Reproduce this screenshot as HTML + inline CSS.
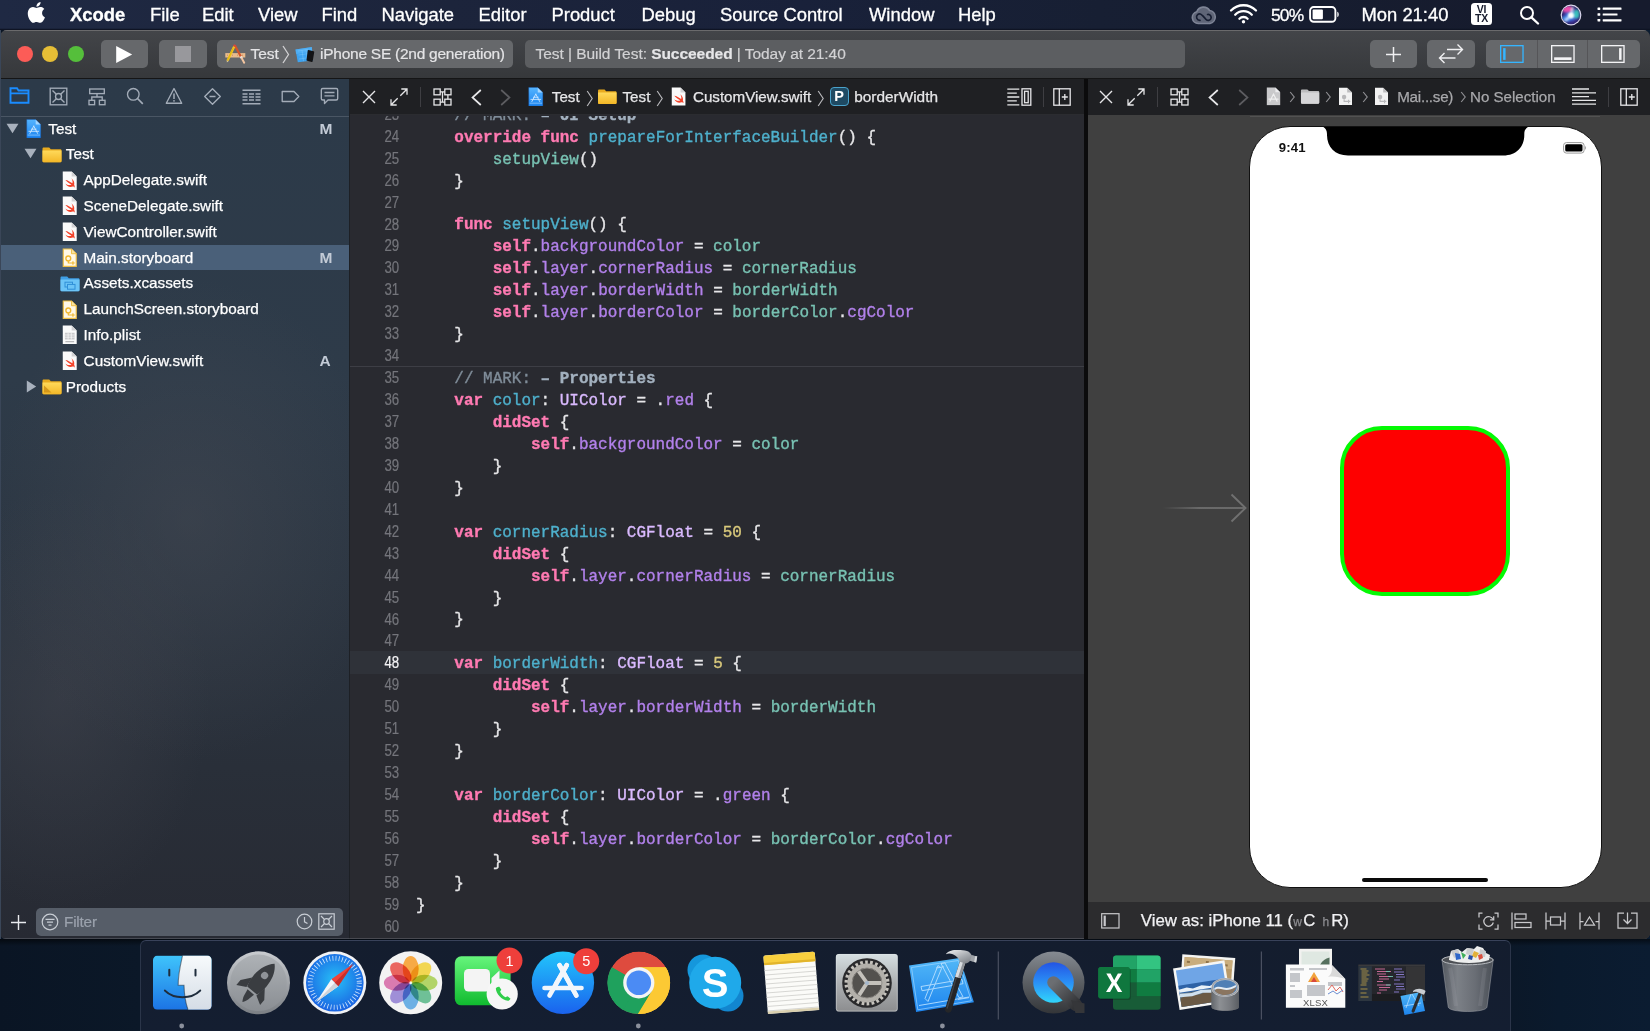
<!DOCTYPE html>
<html>
<head>
<meta charset="utf-8">
<title>Xcode</title>
<style>
*{box-sizing:border-box;margin:0;padding:0}
html,body{width:1650px;height:1031px;overflow:hidden;background:#0e1626;font-family:"Liberation Sans",sans-serif;}
.abs{position:absolute}
#stage{will-change:transform;position:absolute;left:0;top:0;width:1650px;height:1031px;overflow:hidden;background:linear-gradient(90deg,#0a1524 0,#0b1828 140px,#0b1828 1510px,#0a1a2d 1560px,#0b1c31 1650px)}
/* menu bar */
#menubar{position:absolute;left:0;top:0;width:1650px;height:30px;background:linear-gradient(90deg,#1f2943 0,#1c243b 450px,#19213a 800px,#171f33 1100px,#161b2d 1500px,#161b2d 1650px);box-shadow:inset 0 -1.3px 0 #0f1424;color:#fff;font-size:18.4px;white-space:nowrap}
#menubar span{position:absolute;top:3.6px;line-height:22px;-webkit-text-stroke:0.3px currentColor}
/* window */
#win{position:absolute;left:0;top:30px;width:1649.5px;height:909px;background:#292a30;border-radius:7px 7px 6px 6px;overflow:hidden}
#toolbar{position:absolute;left:0;top:0;width:1650px;height:48px;background:linear-gradient(#434549,#36383b);box-shadow:inset 0 1px 0 #6a6a6c}
#tbline{position:absolute;left:0;top:48px;width:1650px;height:1px;background:#151516}
.tbtn{position:absolute;top:10px;height:28px;border-radius:5px;background:#66686b}
/* navigator */
#nav{position:absolute;left:0;top:49px;width:350px;height:860px;background:radial-gradient(ellipse 200px 240px at 190px 440px,rgba(74,77,86,.42),transparent),radial-gradient(ellipse 150px 210px at 60px 620px,rgba(72,73,82,.40),transparent),linear-gradient(180deg,#2c3a49 0,#2e3b49 35%,#2c3642 58%,#292f39 80%,#272a33 100%)}
#navr{position:absolute;left:349px;top:49px;width:1px;height:860px;background:#1d2025}
#navsep{position:absolute;left:0;top:36.5px;width:350px;height:1px;background:#4a5664}
.row{position:absolute;left:0;width:350px;height:26px;color:#fff;font-size:15.3px;line-height:25.8px;white-space:nowrap}
.row .t{position:absolute;top:0;-webkit-text-stroke:0.25px currentColor}
.row .st{position:absolute;left:319.5px;top:0;color:#c3cbd6;font-weight:bold;font-size:15.5px}
/* editor */
#ed{position:absolute;left:350px;top:49px;width:734px;height:860px;background:#292a30}
#edbar{position:absolute;left:0;top:0;width:734px;height:36px;background:#1f2023}
#code{position:absolute;left:0;top:37px;width:734px;height:823px;overflow:hidden;font-family:"Liberation Mono",monospace;font-size:15.97px;color:#e6e6e8}
.ln{position:absolute;left:0;width:734px;height:22px;line-height:22px;white-space:pre}
.ln.cur .n{color:#f2f2f4}
.ln .n{position:absolute;left:0;top:0.75px;width:49.2px;text-align:right;color:#74757b;font-family:"Liberation Sans",sans-serif;font-size:15.6px;-webkit-text-stroke:0.2px currentColor;transform:scaleX(0.85);transform-origin:100% 50%}
.ln .c{position:absolute;left:66px;top:1.7px;-webkit-text-stroke:0.35px currentColor}
.k{color:#ff7ab2;font-weight:bold}
.f{color:#4eb0cc}
.g{color:#78c2b3}
.p{color:#b281eb}
.u{color:#dabaff}
.m{color:#7f8c98}
.mb{color:#a3b1bf;font-weight:bold}
.y{color:#d9c97c}
/* divider */
#div{position:absolute;left:1084px;top:49px;width:4px;height:860px;background:#0b0b0c}
/* right */
#rt{position:absolute;left:1088px;top:49px;width:562px;height:860px;background:#404040}
#rtbar{position:absolute;left:0;top:0;width:562px;height:36px;background:#1f2023}
#rtbot{position:absolute;left:0;top:823px;width:562px;height:37px;background:#2c2c2e}
/* dock */
#dock{position:absolute;left:139.5px;top:940px;width:1371px;height:91px;background:linear-gradient(#141d2e,#141e31);border-top:1px solid #39425a;border-left:1.5px solid #2b3549;border-right:1.5px solid #2b3549;border-top-left-radius:6px;border-top-right-radius:6px}
</style>
</head>
<body>
<div id="stage"><svg width="0" height="0" style="position:absolute">
<defs>
<linearGradient id="gfold" x1="0" y1="0" x2="0" y2="1"><stop offset="0" stop-color="#ffd95a"/><stop offset="1" stop-color="#f3b727"/></linearGradient>
<linearGradient id="gproj" x1="0" y1="0" x2="0" y2="1"><stop offset="0" stop-color="#55b4ff"/><stop offset="1" stop-color="#1b84f0"/></linearGradient>
<symbol id="i-folder" viewBox="0 0 20 16"><path d="M.5 1.800C.5 1 1 .5 1.800.5h5.400l1.600 1.700h9.400c.8 0 1.300.5 1.300 1.300V14c0 .8-.5 1.300-1.300 1.300H1.800C1 15.300.5 14.800.5 14z" fill="#e9ab1f"/><path d="M.5 3.600h19v10.500c0 .7-.5 1.200-1.200 1.200H1.700c-.7 0-1.200-.5-1.200-1.200z" fill="url(#gfold)"/></symbol>
<symbol id="i-swift" viewBox="0 0 16 20"><path d="M.8.500h9.200L15.200 5.700V19.500H.8z" fill="#fafafa"/><path d="M10 .5v5.200h5.200z" fill="#d2d2d4"/><path d="M3.500 9.300c2 2.200 4.300 3.700 6.300 4.700-1.700.9-4.200.8-6.300-1 1.300 2.900 4.800 4.400 7.500 3.100.9-.4 1.600.2 2.100 1.100.2-1.300-.2-2.200-.6-2.900.7-2.300-.5-5-2.900-6.700 1.300 1.900 1.600 3.800 1.100 5.100-2.300-1.300-4.900-3.400-7.200-3.400z" fill="#f4432a"/></symbol>
<symbol id="i-sb" viewBox="0 0 16 20"><path d="M1.300 1h8.500l4.900 4.900V19H1.300z" fill="#fff8e6" stroke="#efbf45" stroke-width="1.200"/><path d="M9.800 1v4.900h4.900" fill="#f9e3a1" stroke="#efbf45" stroke-width="1"/><circle cx="6.500" cy="10.800" r="2.500" fill="none" stroke="#f0b730" stroke-width="1.400"/><path d="M6.500 13.300v2.200h3.300M11.300 13.600v3.800M9.400 15.500h3.800" stroke="#f0b730" stroke-width="1.200" fill="none"/></symbol>
<symbol id="i-sbg" viewBox="0 0 16 20"><path d="M1 .7h8.800l5.200 5.200V19.300H1z" fill="#f2f2f2"/><path d="M9.800.7v5.200H15z" fill="#bdbdbf"/><circle cx="6.500" cy="10.800" r="2.400" fill="#b8b8ba"/><path d="M6.500 13.300v2.200h3.300M11.300 13.600v3.800M9.400 15.500h3.800" stroke="#b8b8ba" stroke-width="1.200" fill="none"/></symbol>
<symbol id="i-plist" viewBox="0 0 16 20"><path d="M.8.500h9.200L15.200 5.700V19.500H.8z" fill="#fafafa"/><path d="M10 .5v5.200h5.200z" fill="#d2d2d4"/><path d="M3 8h10v7H3z" fill="#c9c9cb"/><path d="M3 10.300h10M3 12.600h10M6.300 8v7M9.600 8v7" stroke="#fafafa" stroke-width=".7"/><path d="M3.500 16.500h9v1.300h-9z" fill="#b9b9bb"/></symbol>
<symbol id="i-assets" viewBox="0 0 20 16"><path d="M.5 1.800C.5 1 1 .5 1.800.5h5.400l1.600 1.700h9.400c.8 0 1.300.5 1.300 1.300V14c0 .8-.5 1.300-1.300 1.300H1.800C1 15.300.5 14.800.5 14z" fill="#3f9fe6"/><path d="M.5 3.600h19v10.500c0 .7-.5 1.200-1.200 1.200H1.700c-.7 0-1.200-.5-1.200-1.200z" fill="#6cc4f7"/><rect x="5" y="6.200" width="7.500" height="4.800" fill="none" stroke="#2f8fd8" stroke-width="1"/><rect x="7.500" y="8.400" width="7.500" height="4.800" fill="#6cc4f7" stroke="#2f8fd8" stroke-width="1"/></symbol>
<symbol id="i-proj" viewBox="0 0 16 20"><path d="M.8.500h9.200L15.200 5.700V19.500H.8z" fill="url(#gproj)"/><path d="M10 .5v5.200h5.200z" fill="#a5d6ff"/><path d="M8 7.300l-4 7.600M8 7.300l4 7.600M3 12.700h10M5.500 10.500h5" stroke="#cfe8ff" stroke-width=".9" fill="none" stroke-linecap="round"/><path d="M1.500 16.600h13" stroke="#9fd2ff" stroke-width=".7"/><path d="M.8.500h9.200L15.200 5.700V19.500H.8z" fill="none" stroke="#1a5fb8" stroke-width=".6" opacity=".7"/></symbol>
<symbol id="i-projg" viewBox="0 0 16 20"><path d="M.8.500h9.200L15.200 5.700V19.500H.8z" fill="#c9c9cb"/><path d="M10 .5v5.200h5.200z" fill="#ececee"/><path d="M8 7.500l-3.800 7.800M8 7.500l3.800 7.800M3 13h10" stroke="#eeeeef" stroke-width="1.300" fill="none" stroke-linecap="round"/></symbol>
<symbol id="i-foldg" viewBox="0 0 20 16"><path d="M.5 1.800C.5 1 1 .5 1.800.5h5.400l1.600 1.700h9.400c.8 0 1.300.5 1.300 1.300V14c0 .8-.5 1.300-1.300 1.300H1.800C1 15.300.5 14.800.5 14z" fill="#bcbcbe"/><path d="M.5 3.600h19v10.500c0 .7-.5 1.200-1.200 1.200H1.700c-.7 0-1.200-.5-1.200-1.200z" fill="#d6d6d8"/></symbol>
</defs>
</svg>

<div id="menubar"><svg class="abs" style="left:25.500px;top:1.300px" width="20.600" height="22.700" viewBox="0 0 20 22"><path fill="#fff" d="M15.6 11.6c0-2.5 2.1-3.7 2.2-3.8-1.2-1.7-3-2-3.700-2-1.600-.2-3.100.9-3.900.9-.8 0-2-.9-3.400-.9-1.700 0-3.300 1-4.200 2.600-1.800 3.100-.5 7.700 1.300 10.200.9 1.200 1.900 2.600 3.200 2.600 1.300-.1 1.800-.8 3.400-.8 1.500 0 2 .8 3.400.8 1.400 0 2.300-1.200 3.100-2.500 1-1.400 1.400-2.800 1.400-2.900-.1 0-2.800-1.100-2.800-4.200zM13.100 4.200c.7-.9 1.200-2 1-3.200-1 0-2.200.7-2.900 1.500-.6.700-1.200 1.900-1 3 1.100.100 2.200-.5 2.900-1.300z"/></svg>
<span style="left:70px;font-weight:bold">Xcode</span>
<span style="left:150px">File</span>
<span style="left:202px">Edit</span>
<span style="left:258px">View</span>
<span style="left:321.500px">Find</span>
<span style="left:381.500px">Navigate</span>
<span style="left:478.500px">Editor</span>
<span style="left:551.500px">Product</span>
<span style="left:641.500px">Debug</span>
<span style="left:720px">Source Control</span>
<span style="left:869px">Window</span>
<span style="left:958px">Help</span>
<!-- creative cloud -->
<svg class="abs" style="left:1191px;top:5.500px" width="26" height="19" viewBox="0 0 26 19"><path d="M7.200 17.500a6 6 0 0 1-1.400-11.800 7.200 7.200 0 0 1 12.800-1.200 6.600 6.600 0 0 1 .4 13z" fill="#5f6577" stroke="#7e8496" stroke-width="1.600"/><path d="M9 14.300c-3.200 0-4.600-3.600-2.400-5.600 1.800-1.600 3.600-.6 5 1l3.400 3.600c1.600 1.600 3.800 1.400 4.800-.4 1.200-2.400-.6-4.800-3.200-4.400" fill="none" stroke="#171e32" stroke-width="1.700" stroke-linecap="round"/></svg>
<!-- wifi -->
<svg class="abs" style="left:1229px;top:3px" width="29" height="21" viewBox="0 0 29 21"><g fill="none" stroke="#fff" stroke-width="2.300" stroke-linecap="round"><path d="M2 7.500a17.500 17.500 0 0 1 25 0"/><path d="M6.200 11.700a11.600 11.600 0 0 1 16.600 0"/><path d="M10.400 15.700a5.800 5.800 0 0 1 8.200 0"/></g><circle cx="14.500" cy="18.700" r="1.700" fill="#fff"/></svg>
<span style="left:1271px;font-size:17.400px;letter-spacing:-0.8px">50%</span>
<!-- battery -->
<svg class="abs" style="left:1309px;top:6px" width="31" height="17" viewBox="0 0 31 17"><rect x="1.100" y="1" width="25.300" height="14.800" rx="3.600" fill="none" stroke="#fff" stroke-width="1.900"/><rect x="3.600" y="3.600" width="10.300" height="9.600" rx="1" fill="#fff"/><path d="M28.300 5.700c1.900.5 1.900 4.900 0 5.400z" fill="#fff"/></svg>
<span style="left:1361.500px">Mon 21:40</span>
<!-- VI TX -->
<div class="abs" style="left:1471px;top:3px;width:21px;height:21.500px;border-radius:3.500px;background:#fff;color:#161b2d;font-weight:bold;font-size:10.500px;line-height:9px;text-align:center;padding-top:2px;letter-spacing:-0.2px">VI<br>TX</div>
<!-- search -->
<svg class="abs" style="left:1519px;top:5px" width="21" height="20" viewBox="0 0 21 20"><circle cx="8" cy="8" r="6" fill="none" stroke="#fff" stroke-width="2"/><path d="M12.400 12.400L19 18.500" stroke="#fff" stroke-width="2.300" stroke-linecap="round"/></svg>
<!-- siri -->
<svg class="abs" style="left:1560px;top:3.800px" width="22" height="22" viewBox="0 0 22 22"><defs><radialGradient id="sg" cx=".5" cy=".52" r=".5"><stop offset="0" stop-color="#fff"/><stop offset=".18" stop-color="#bfeaff"/><stop offset=".42" stop-color="#3f6fd8"/><stop offset=".75" stop-color="#3a2f8e"/><stop offset="1" stop-color="#2a2466"/></radialGradient><filter id="sb" x="-50%" y="-50%" width="200%" height="200%"><feGaussianBlur stdDeviation="1.300"/></filter><clipPath id="sc"><circle cx="11" cy="11" r="9.200"/></clipPath></defs><circle cx="11" cy="11" r="10.400" fill="#dcd8ee"/><circle cx="11" cy="11" r="9.200" fill="url(#sg)"/><g clip-path="url(#sc)" filter="url(#sb)"><ellipse cx="7" cy="5" rx="5.500" ry="3.500" fill="#ef4fae" opacity=".95"/><ellipse cx="16.500" cy="10" rx="3" ry="4.500" fill="#38dcc0" opacity=".8"/><ellipse cx="6" cy="15" rx="4" ry="3" fill="#3fa8ff" opacity=".8"/><path d="M5 17L11 11 13 3" stroke="#fff" stroke-width="1.600" fill="none" opacity=".9"/><circle cx="11" cy="11.500" r="2.600" fill="#fff"/></g></svg>
<!-- list -->
<svg class="abs" style="left:1596.500px;top:6.500px" width="26" height="15" viewBox="0 0 26 15"><g fill="#fff"><rect x="0.500" y="0.500" width="2.800" height="2.400" rx=".4"/><rect x="5.700" y="0.600" width="18.800" height="2.200" rx=".4"/><rect x="0.500" y="6.300" width="2.800" height="2.400" rx=".4"/><rect x="5.700" y="6.400" width="14.800" height="2.200" rx=".4"/><rect x="0.500" y="12.100" width="2.800" height="2.400" rx=".4"/><rect x="5.700" y="12.200" width="18.800" height="2.200" rx=".4"/></g></svg>
</div>
<div id="win">
  <div id="toolbar"><!-- traffic lights -->
<div class="abs" style="left:16.500px;top:16px;width:16px;height:16px;border-radius:8px;background:#fc5c57"></div>
<div class="abs" style="left:42.300px;top:16px;width:16px;height:16px;border-radius:8px;background:#e6be36"></div>
<div class="abs" style="left:68px;top:16px;width:16px;height:16px;border-radius:8px;background:#55bf3b"></div>
<!-- play -->
<div class="tbtn" style="left:101px;width:47px"><svg class="abs" style="left:14px;top:5px" width="19" height="19" viewBox="0 0 19 19"><path d="M1.200 1v17L17.200 9.500z" fill="#fff"/></svg></div>
<!-- stop -->
<div class="tbtn" style="left:159px;width:47.500px"><div class="abs" style="left:16px;top:6px;width:16px;height:16px;background:#98989c"></div></div>
<!-- scheme -->
<div class="tbtn" style="left:216.700px;width:296.800px;background:#66686b;color:#e4e4e6;font-size:15.500px;line-height:28px;white-space:nowrap;-webkit-text-stroke:0.2px currentColor">
 <svg class="abs" style="left:6px;top:3px" width="23" height="22" viewBox="0 0 23 22">
  <rect x="2.300" y="10.100" width="20" height="4.400" fill="#e9bb8c"/><path d="M4 11.500h.8v1.600H4zM6.500 11.500h.8v1.600h-.8zM9 11.500h.8v1.600H9zM14 11.500h.8v1.600h-.8zM16.500 11.500h.8v1.600h-.8zM19 11.500h.8v1.600h-.8z" fill="#c99568"/>
  <path d="M11.800 2.300L17.800 13.500" stroke="#d1542a" stroke-width="2.200"/><path d="M17.800 13.500l1.100 2" stroke="#ececec" stroke-width="2.200"/><path d="M18.900 15.500l2.300 4.200" stroke="#f1c4a0" stroke-width="2" stroke-linecap="round"/>
  <path d="M11.200 3.500L4.600 17.600" stroke="#f5c71c" stroke-width="2.300"/><path d="M5.600 17.900L3.800 19.400 3.700 17z" fill="#f0d9a8"/><path d="M4.200 18.700l-.4.700-.05-.9z" fill="#333"/><path d="M12 1.800l-.8 1.700" stroke="#e0453a" stroke-width="2.300"/>
  <path d="M10.300 4.800L4.200 17.800" stroke="#d9a90f" stroke-width=".7"/>
 </svg>
 <span class="abs" style="left:33.800px;top:0">Test</span>
 <svg class="abs" style="left:64.800px;top:5px" width="10" height="19" viewBox="0 0 10 19"><path d="M2 1l5.500 8.500L2 18" fill="none" stroke="#d0d0d2" stroke-width="1.300"/></svg>
 <svg class="abs" style="left:77px;top:4px" width="21" height="21" viewBox="0 0 21 21">
  <path d="M1.500 5.500L17.800 2.900 19.100 16.500 3.800 18.200z" fill="#3ea3f0"/><path d="M1.500 5.500L17.800 2.900 18.200 7.500 2 10z" fill="#5bb6f6" opacity=".6"/>
  <path d="M4 7l10-1.600M4.500 11l10-1.400M5 15l9-1.200M8 6.200l1.500 11M12 5.600l1.400 10.800" stroke="#8fd0fb" stroke-width=".5" fill="none" opacity=".7"/>
  <path d="M14.600 6.100l5 1.200c.4.100.7.500.6.900l-1.500 9.100c-.1.400-.5.700-.9.600l-4.700-1.100c-.4-.1-.7-.5-.6-.9L13.700 6.700c.1-.4.500-.7.900-.6z" fill="#131315"/>
 </svg>
 <span class="abs" style="left:103.300px;top:0;letter-spacing:-0.25px">iPhone SE (2nd generation)</span>
</div>
<!-- status -->
<div class="abs" style="left:525px;top:10px;width:659.500px;height:28px;border-radius:5px;background:#5c5e61;color:#d2d2d4;font-size:15.500px;line-height:28px;white-space:nowrap;letter-spacing:-0.05px;-webkit-text-stroke:0.2px currentColor"><span class="abs" style="left:10.500px;top:0">Test | Build Test: <b style="color:#e6e6e8">Succeeded</b> | Today at 21:40</span></div>
<!-- plus -->
<div class="tbtn" style="left:1369.500px;width:47.500px"><svg class="abs" style="left:15.500px;top:5.500px" width="17" height="17" viewBox="0 0 17 17"><path d="M8.500 1v15M1 8.500h15" stroke="#f0f0f2" stroke-width="1.500" fill="none"/></svg></div>
<!-- swap -->
<div class="tbtn" style="left:1427px;width:47.500px"><svg class="abs" style="left:11px;top:3px" width="26" height="22" viewBox="0 0 26 22"><g fill="none" stroke="#f0f0f2" stroke-width="1.400"><path d="M9 6.500H24.500M19.500 1.500l5 5-5 5"/><path d="M17.500 15H1.500M6.500 10l-5 5 5 5"/></g></svg></div>
<!-- segmented -->
<div class="tbtn" style="left:1485.500px;width:154px">
 <div class="abs" style="left:51.500px;top:0;width:1px;height:28px;background:#555558"></div>
 <div class="abs" style="left:101.500px;top:0;width:1px;height:28px;background:#555558"></div>
 <svg class="abs" style="left:14.500px;top:4.800px" width="23.700" height="18" viewBox="0 0 25 19"><rect x=".7" y=".7" width="23.600" height="17.600" fill="none" stroke="#35b5ff" stroke-width="1.400"/><rect x="3.300" y="3.300" width="2.600" height="12.400" fill="#35b5ff"/></svg>
 <svg class="abs" style="left:65.500px;top:4.800px" width="23.700" height="18" viewBox="0 0 25 19"><rect x=".7" y=".7" width="23.600" height="17.600" fill="none" stroke="#f4f4f6" stroke-width="1.400"/><rect x="3.300" y="13" width="18.400" height="2.800" fill="#f4f4f6"/></svg>
 <svg class="abs" style="left:115.500px;top:4.800px" width="23.700" height="18" viewBox="0 0 25 19"><rect x=".7" y=".7" width="23.600" height="17.600" fill="none" stroke="#f4f4f6" stroke-width="1.400"/><rect x="19.100" y="3.300" width="2.600" height="12.400" fill="#f4f4f6"/></svg>
</div>
</div>
  <div id="tbline"></div>
  <div id="nav"><div id="navsep"></div><svg class="abs" style="left:9px;top:8px" width="21" height="17" viewBox="0 0 21 17"><path d="M1.500 15.700V1.300h6.500l1.500 2.200h10v12.200z" fill="none" stroke="#1a8cff" stroke-width="1.900"/><path d="M1.500 6.300h18" stroke="#1a8cff" stroke-width="1.700"/></svg>
<svg class="abs" style="left:48.500px;top:7.5px" width="19" height="19" viewBox="0 0 19 19"><rect x="1.200" y="1.200" width="16.600" height="16.600" fill="none" stroke="#a3acb8" stroke-width="1.35"/><circle cx="9.500" cy="9.500" r="3" fill="none" stroke="#a3acb8" stroke-width="1.35"/><path d="M3.500 3.500l3.800 3.800M15.500 3.500l-3.800 3.800M3.500 15.500l3.800-3.800M15.500 15.500l-3.800-3.800" fill="none" stroke="#a3acb8" stroke-width="1.35"/></svg>
<svg class="abs" style="left:87.500px;top:8.5px" width="18" height="18" viewBox="0 0 18 18"><rect x="1.700" y="1" width="14.600" height="4.600" fill="none" stroke="#a3acb8" stroke-width="1.35"/><rect x="1" y="12.300" width="5.600" height="4.400" fill="none" stroke="#a3acb8" stroke-width="1.35"/><rect x="11.400" y="12.300" width="5.600" height="4.400" fill="none" stroke="#a3acb8" stroke-width="1.35"/><path d="M3.800 12.300V9h10.400v3.300M9 5.600V9" fill="none" stroke="#a3acb8" stroke-width="1.35"/></svg>
<svg class="abs" style="left:126px;top:8px" width="18" height="18" viewBox="0 0 18 18"><circle cx="7.300" cy="7.300" r="5.800" fill="none" stroke="#a3acb8" stroke-width="1.35"/><path d="M11.500 11.500l5.300 5.300" fill="none" stroke="#a3acb8" stroke-width="1.700"/></svg>
<svg class="abs" style="left:165px;top:7.5px" width="18" height="18" viewBox="0 0 18 18"><path d="M9 1.500l7.700 14.700H1.300z" fill="none" stroke="#a3acb8" stroke-width="1.35" stroke-linejoin="round"/><path d="M9 6.500v5.500" stroke="#a3acb8" stroke-width="1.500"/><circle cx="9" cy="13.800" r=".9" fill="#a3acb8"/></svg>
<svg class="abs" style="left:203px;top:7.5px" width="19" height="19" viewBox="0 0 19 19"><path d="M9.500 1.700l7.800 7.800-7.800 7.800-7.800-7.800z" fill="none" stroke="#a3acb8" stroke-width="1.35" stroke-linejoin="round"/><path d="M6.500 9.500h6" fill="none" stroke="#a3acb8" stroke-width="1.35"/></svg>
<svg class="abs" style="left:242px;top:9.5px" width="19" height="16" viewBox="0 0 19 16"><path d="M.5 1.200h18M.5 14.700h18" stroke="#a3acb8" stroke-width="1.400"/><path d="M.5 5h5M7 5h5M13.500 5h5M.5 8h5M7 8h5M13.500 8h5M.5 11h5M7 11h5M13.500 11h5" stroke="#a3acb8" stroke-width="1.300"/></svg>
<svg class="abs" style="left:280.500px;top:10.5px" width="19" height="13" viewBox="0 0 19 13"><path d="M1.200 1.500h11.800l4.800 5-4.800 5H1.200z" fill="none" stroke="#a3acb8" stroke-width="1.35" stroke-linejoin="round"/></svg>
<svg class="abs" style="left:319.500px;top:7.5px" width="19" height="19" viewBox="0 0 19 19"><path d="M2.800 1.500h13.400c.8 0 1.500.7 1.500 1.500v8.500c0 .8-.7 1.500-1.500 1.500H8l-3.500 3.500V13H2.800c-.8 0-1.500-.7-1.500-1.500V3c0-.8.700-1.500 1.500-1.500z" fill="none" stroke="#a3acb8" stroke-width="1.35" stroke-linejoin="round"/><path d="M4.500 5.500h10M4.500 8.800h10" fill="none" stroke="#a3acb8" stroke-width="1.35"/></svg>
<div class="row" style="top:36.5px"><svg class="abs" style="left:6.2px;top:7.200px" width="13" height="11" viewBox="0 0 13 11"><path d="M.5.8h12L6.500 10.200z" fill="#a8b1bd"/></svg><svg class="abs" style="left:26.0px;top:3.500px" width="15.500" height="19.400"><use href="#i-proj"/></svg><span class="t" style="left:48.3px">Test</span><span class="st">M</span></div>
<div class="row" style="top:62.3px"><svg class="abs" style="left:24.4px;top:7.200px" width="13" height="11" viewBox="0 0 13 11"><path d="M.5.8h12L6.500 10.200z" fill="#a8b1bd"/></svg><svg class="abs" style="left:41.8px;top:5.500px" width="20" height="16"><use href="#i-folder"/></svg><span class="t" style="left:65.8px">Test</span></div>
<div class="row" style="top:88.1px"><svg class="abs" style="left:62.0px;top:3.600px" width="15.500" height="19.400"><use href="#i-swift"/></svg><span class="t" style="left:83.6px">AppDelegate.swift</span></div>
<div class="row" style="top:113.9px"><svg class="abs" style="left:62.0px;top:3.600px" width="15.500" height="19.400"><use href="#i-swift"/></svg><span class="t" style="left:83.6px">SceneDelegate.swift</span></div>
<div class="row" style="top:139.7px"><svg class="abs" style="left:62.0px;top:3.600px" width="15.500" height="19.400"><use href="#i-swift"/></svg><span class="t" style="left:83.6px">ViewController.swift</span></div>
<div class="abs" style="left:0;top:165.5px;width:350px;height:25.8px;background:#4a6079"></div>
<div class="row" style="top:165.5px"><svg class="abs" style="left:62.0px;top:3.600px" width="15.500" height="19.400"><use href="#i-sb"/></svg><span class="t" style="left:83.6px">Main.storyboard</span><span class="st">M</span></div>
<div class="row" style="top:191.3px"><svg class="abs" style="left:59.8px;top:5.500px" width="20" height="16"><use href="#i-assets"/></svg><span class="t" style="left:83.6px">Assets.xcassets</span></div>
<div class="row" style="top:217.1px"><svg class="abs" style="left:62.0px;top:3.600px" width="15.500" height="19.400"><use href="#i-sb"/></svg><span class="t" style="left:83.6px">LaunchScreen.storyboard</span></div>
<div class="row" style="top:242.9px"><svg class="abs" style="left:62.0px;top:3.600px" width="15.500" height="19.400"><use href="#i-plist"/></svg><span class="t" style="left:83.6px">Info.plist</span></div>
<div class="row" style="top:268.7px"><svg class="abs" style="left:62.0px;top:3.600px" width="15.500" height="19.400"><use href="#i-swift"/></svg><span class="t" style="left:83.6px">CustomView.swift</span><span class="st">A</span></div>
<div class="row" style="top:294.5px"><svg class="abs" style="left:25.5px;top:6.500px" width="11" height="13" viewBox="0 0 11 13"><path d="M.8.500v12L10.200 6.500z" fill="#a8b1bd"/></svg><svg class="abs" style="left:41.8px;top:5.500px" width="20" height="16"><use href="#i-folder"/></svg><span class="t" style="left:65.8px">Products</span><svg class="abs" style="left:41.8px;top:5.500px" width="20" height="16" viewBox="0 0 20 16"><path d="M2 6.500L9.500 13.500H2z" fill="#c98a12" opacity=".75"/></svg></div>
<svg class="abs" style="left:10.200px;top:834.700px" width="17" height="17" viewBox="0 0 17 17"><path d="M8.500 1v15M1 8.500h15" stroke="#e8eaee" stroke-width="1.400"/></svg>
<div class="abs" style="left:36.300px;top:828.500px;width:306.700px;height:28px;border-radius:5px;background:#565d68"></div>
<svg class="abs" style="left:41px;top:833.500px" width="18" height="18" viewBox="0 0 18 18"><circle cx="9" cy="9" r="7.800" fill="none" stroke="#c8cdd4" stroke-width="1.200"/><path d="M4.500 6.300h9M6 9.200h6M7.500 12.100h3" stroke="#c8cdd4" stroke-width="1.300"/></svg>
<span class="abs" style="left:64px;top:832.800px;font-size:15.300px;letter-spacing:-0.2px;line-height:20px;color:#9ba2ad;-webkit-text-stroke:0.2px currentColor">Filter</span>
<svg class="abs" style="left:295.500px;top:834px" width="17" height="17" viewBox="0 0 17 17"><circle cx="8.500" cy="8.500" r="7.300" fill="none" stroke="#c8cdd4" stroke-width="1.200"/><path d="M8.500 4v4.800l3 1.800" fill="none" stroke="#c8cdd4" stroke-width="1.200"/></svg>
<svg class="abs" style="left:318px;top:834px" width="17" height="17" viewBox="0 0 17 17"><rect x=".8" y=".8" width="15.400" height="15.400" fill="none" stroke="#c8cdd4" stroke-width="1.200"/><circle cx="8.500" cy="8.500" r="2.800" fill="none" stroke="#c8cdd4" stroke-width="1.200"/><path d="M3 3l3.500 3.500M14 3l-3.500 3.500M3 14l3.500-3.500M14 14l-3.500-3.500" stroke="#c8cdd4" stroke-width="1.200"/></svg></div>
  <div id="ed"><div id="edbar"><svg class="abs" style="left:11.8px;top:11.0px" width="14" height="14" viewBox="0 0 14 14"><path d="M1 1l12 12M13 1L1 13" stroke="#e6e6e8" stroke-width="1.400" fill="none"/></svg>
<svg class="abs" style="left:39.5px;top:9.2px" width="18" height="18" viewBox="0 0 18 18"><g fill="none" stroke="#e6e6e8" stroke-width="1.300"><path d="M10.300 7.700L16.800 1.200M11.300 1h5.700v5.700"/><path d="M7.700 10.300L1.200 16.800M1 11.300v5.700h5.700"/></g></svg>
<div class="abs" style="left:69.5px;top:8px;width:1px;height:20px;background:#3e3e42"></div>
<svg class="abs" style="left:83.2px;top:9.0px" width="19" height="18" viewBox="0 0 19 18"><g fill="none" stroke="#e6e6e8" stroke-width="1.300"><rect x="1" y="1" width="6.200" height="5.800"/><rect x="11.800" y="1" width="6.200" height="5.800"/><rect x="1" y="11.200" width="6.200" height="5.800"/><rect x="11.800" y="11.200" width="6.200" height="5.800"/><path d="M7.200 3.900h4.600M7.200 14.100h4.600M14.900 6.800v4.400M9.500 3.900v10.200"/></g></svg>
<svg class="abs" style="left:120.5px;top:9.5px" width="11" height="17" viewBox="0 0 11 17"><path d="M9.800 1L1.500 8.500 9.800 16" stroke="#e6e6e8" stroke-width="1.700" fill="none"/></svg>
<svg class="abs" style="left:150.2px;top:9.5px" width="11" height="17" viewBox="0 0 11 17"><path d="M1.200 1l8.300 7.500L1.200 16" stroke="#5c5c60" stroke-width="1.700" fill="none"/></svg>
<svg class="abs" style="left:178.3px;top:7.5px" width="15.6" height="19.5"><use href="#i-proj"/></svg>
<span class="abs" style="left:201.8px;top:0;line-height:36px;font-size:15.2px;color:#e6e6e8;white-space:nowrap;letter-spacing:0.00px;-webkit-text-stroke:0.25px currentColor">Test</span>
<svg class="abs" style="left:235.5px;top:10.5px" width="8" height="17" viewBox="0 0 8 17"><path d="M1.200 1l5 7.500-5 7.500" stroke="#b4b4b8" stroke-width="1.200" fill="none"/></svg>
<svg class="abs" style="left:246.7px;top:10.2px" width="20.6" height="15.6"><use href="#i-folder"/></svg>
<span class="abs" style="left:272.5px;top:0;line-height:36px;font-size:15.2px;color:#e6e6e8;white-space:nowrap;letter-spacing:0.00px;-webkit-text-stroke:0.25px currentColor">Test</span>
<svg class="abs" style="left:306.0px;top:10.5px" width="8" height="17" viewBox="0 0 8 17"><path d="M1.200 1l5 7.500-5 7.500" stroke="#b4b4b8" stroke-width="1.200" fill="none"/></svg>
<svg class="abs" style="left:320.5px;top:7.8px" width="15.2" height="19.0"><use href="#i-swift"/></svg>
<span class="abs" style="left:343.0px;top:0;line-height:36px;font-size:15.2px;color:#e6e6e8;white-space:nowrap;letter-spacing:-0.03px;-webkit-text-stroke:0.25px currentColor">CustomView.swift</span>
<svg class="abs" style="left:467.0px;top:10.5px" width="8" height="17" viewBox="0 0 8 17"><path d="M1.200 1l5 7.500-5 7.500" stroke="#b4b4b8" stroke-width="1.200" fill="none"/></svg>
<div class="abs" style="left:479.5px;top:8px;width:19px;height:19px;border-radius:4px;background:#1f4a63;border:1.300px solid #4aa3cc;color:#fff;font-weight:bold;font-size:14.500px;line-height:16.500px;text-align:center">P</div>
<span class="abs" style="left:504.2px;top:0;line-height:36px;font-size:15.4px;color:#e6e6e8;white-space:nowrap;letter-spacing:0.00px;-webkit-text-stroke:0.25px currentColor">borderWidth</span>
<svg class="abs" style="left:656.5px;top:8.500px" width="25" height="18" viewBox="0 0 25 18"><g fill="none" stroke="#e6e6e8" stroke-width="1.300"><path d="M.3 1.200h12M.3 5.100h9.500M.3 9h12M.3 12.900h9.500M.3 16.800h12"/><rect x="15" y=".8" width="8.800" height="16.400"/><rect x="17.600" y="3.300" width="3.600" height="11.400"/></g></svg>
<div class="abs" style="left:692.5px;top:8px;width:1px;height:20px;background:#3e3e42"></div>
<svg class="abs" style="left:703.3px;top:8.5px" width="18" height="18" viewBox="0 0 18 18"><g fill="none" stroke="#e6e6e8" stroke-width="1.300"><rect x=".8" y=".8" width="16.400" height="16.400"/><path d="M6.300 .8v16.400M8.800 9h6M11.800 6v6"/></g></svg>
<div class="abs" style="left:0;top:35px;width:734px;height:1px;background:#2b2c30"></div></div><div id="code"><div class="abs" style="left:0;top:535.16px;width:734px;height:23px;background:#2f3239"></div>
<div class="abs" style="left:0;top:250px;width:734px;height:1px;background:#3d3e45"></div>
<div class="ln" style="top:-12.94px"><span class="n">23</span><span class="c">    <span class="m">// MARK: </span><span class="mb">– UI Setup</span></span></div>
<div class="ln" style="top:9.00px"><span class="n">24</span><span class="c">    <span class="k">override</span> <span class="k">func</span> <span class="f">prepareForInterfaceBuilder</span>() {</span></div>
<div class="ln" style="top:30.94px"><span class="n">25</span><span class="c">        <span class="g">setupView</span>()</span></div>
<div class="ln" style="top:52.89px"><span class="n">26</span><span class="c">    }</span></div>
<div class="ln" style="top:74.83px"><span class="n">27</span><span class="c"></span></div>
<div class="ln" style="top:96.78px"><span class="n">28</span><span class="c">    <span class="k">func</span> <span class="f">setupView</span>() {</span></div>
<div class="ln" style="top:118.72px"><span class="n">29</span><span class="c">        <span class="k">self</span>.<span class="p">backgroundColor</span> = <span class="g">color</span></span></div>
<div class="ln" style="top:140.66px"><span class="n">30</span><span class="c">        <span class="k">self</span>.<span class="p">layer</span>.<span class="p">cornerRadius</span> = <span class="g">cornerRadius</span></span></div>
<div class="ln" style="top:162.61px"><span class="n">31</span><span class="c">        <span class="k">self</span>.<span class="p">layer</span>.<span class="p">borderWidth</span> = <span class="g">borderWidth</span></span></div>
<div class="ln" style="top:184.55px"><span class="n">32</span><span class="c">        <span class="k">self</span>.<span class="p">layer</span>.<span class="p">borderColor</span> = <span class="g">borderColor</span>.<span class="p">cgColor</span></span></div>
<div class="ln" style="top:206.50px"><span class="n">33</span><span class="c">    }</span></div>
<div class="ln" style="top:228.44px"><span class="n">34</span><span class="c"></span></div>
<div class="ln" style="top:250.38px"><span class="n">35</span><span class="c">    <span class="m">// MARK: </span><span class="mb">– Properties</span></span></div>
<div class="ln" style="top:272.33px"><span class="n">36</span><span class="c">    <span class="k">var</span> <span class="f">color</span>: <span class="u">UIColor</span> = .<span class="p">red</span> {</span></div>
<div class="ln" style="top:294.27px"><span class="n">37</span><span class="c">        <span class="k">didSet</span> {</span></div>
<div class="ln" style="top:316.22px"><span class="n">38</span><span class="c">            <span class="k">self</span>.<span class="p">backgroundColor</span> = <span class="g">color</span></span></div>
<div class="ln" style="top:338.16px"><span class="n">39</span><span class="c">        }</span></div>
<div class="ln" style="top:360.10px"><span class="n">40</span><span class="c">    }</span></div>
<div class="ln" style="top:382.05px"><span class="n">41</span><span class="c"></span></div>
<div class="ln" style="top:403.99px"><span class="n">42</span><span class="c">    <span class="k">var</span> <span class="f">cornerRadius</span>: <span class="u">CGFloat</span> = <span class="y">50</span> {</span></div>
<div class="ln" style="top:425.94px"><span class="n">43</span><span class="c">        <span class="k">didSet</span> {</span></div>
<div class="ln" style="top:447.88px"><span class="n">44</span><span class="c">            <span class="k">self</span>.<span class="p">layer</span>.<span class="p">cornerRadius</span> = <span class="g">cornerRadius</span></span></div>
<div class="ln" style="top:469.82px"><span class="n">45</span><span class="c">        }</span></div>
<div class="ln" style="top:491.77px"><span class="n">46</span><span class="c">    }</span></div>
<div class="ln" style="top:513.71px"><span class="n">47</span><span class="c"></span></div>
<div class="ln cur" style="top:535.66px"><span class="n">48</span><span class="c">    <span class="k">var</span> <span class="f">borderWidth</span>: <span class="u">CGFloat</span> = <span class="y">5</span> {</span></div>
<div class="ln" style="top:557.60px"><span class="n">49</span><span class="c">        <span class="k">didSet</span> {</span></div>
<div class="ln" style="top:579.54px"><span class="n">50</span><span class="c">            <span class="k">self</span>.<span class="p">layer</span>.<span class="p">borderWidth</span> = <span class="g">borderWidth</span></span></div>
<div class="ln" style="top:601.49px"><span class="n">51</span><span class="c">        }</span></div>
<div class="ln" style="top:623.43px"><span class="n">52</span><span class="c">    }</span></div>
<div class="ln" style="top:645.38px"><span class="n">53</span><span class="c"></span></div>
<div class="ln" style="top:667.32px"><span class="n">54</span><span class="c">    <span class="k">var</span> <span class="f">borderColor</span>: <span class="u">UIColor</span> = .<span class="p">green</span> {</span></div>
<div class="ln" style="top:689.26px"><span class="n">55</span><span class="c">        <span class="k">didSet</span> {</span></div>
<div class="ln" style="top:711.21px"><span class="n">56</span><span class="c">            <span class="k">self</span>.<span class="p">layer</span>.<span class="p">borderColor</span> = <span class="g">borderColor</span>.<span class="p">cgColor</span></span></div>
<div class="ln" style="top:733.15px"><span class="n">57</span><span class="c">        }</span></div>
<div class="ln" style="top:755.10px"><span class="n">58</span><span class="c">    }</span></div>
<div class="ln" style="top:777.04px"><span class="n">59</span><span class="c">}</span></div>
<div class="ln" style="top:798.98px"><span class="n">60</span><span class="c"></span></div></div></div>
  <div id="navr"></div><div class="abs" style="left:0;top:908px;width:1649px;height:1px;background:rgba(130,132,140,.36)"></div><div id="div"></div>
  <div id="rt"><div class="abs" style="left:162px;top:37px;width:350px;height:1px;background:#525252"></div>
<svg class="abs" style="left:72px;top:414px" width="90" height="30" viewBox="0 0 90 30"><defs><linearGradient id="ag" x1="0" y1="0" x2="1" y2="0"><stop offset="0" stop-color="#6e6e6e" stop-opacity="0"/><stop offset=".45" stop-color="#6e6e6e"/></linearGradient></defs><rect x="3" y="14.100" width="81" height="1.800" fill="url(#ag)"/><path d="M71.500 1.500L85.500 15 71.500 28.500" fill="none" stroke="#707070" stroke-width="1.900"/></svg>
<div class="abs" style="left:160.5px;top:46.8px;width:353.5px;height:762.5px;border-radius:41px;background:#fff;border:1.200px solid #111;overflow:hidden">
<svg class="abs" style="left:69.1px;top:-1px" width="213.3" height="31" viewBox="0 0 213.3 31"><path d="M0 0C5 0 8 3 8 8V9C8 21 16 29.500 29 29.500H184.3C197.3 29.500 205.3 21 205.3 9V8C205.3 3 208.3 0 213.3 0z" fill="#000"/></svg>
<span class="abs" style="left:29.3px;top:13.0px;font-size:13.200px;font-weight:bold;color:#111;line-height:16px;letter-spacing:.1px">9:41</span>
<svg class="abs" style="left:313.9px;top:15.2px" width="24" height="12" viewBox="0 0 24 12"><rect x=".6" y=".6" width="20.500" height="10.500" rx="2.800" fill="none" stroke="#9a9a9a" stroke-width="1"/><rect x="2.200" y="2.200" width="17.300" height="7.300" rx="1.500" fill="#000"/><path d="M22.200 4c1.200.3 1.200 3.400 0 3.700z" fill="#9a9a9a"/></svg>
<div class="abs" style="left:90.6px;top:299.6px;width:170px;height:170px;border-radius:42px;background:#fe0000;border:4.300px solid #04f904"></div>
<div class="abs" style="left:112.8px;top:750.8px;width:126px;height:4.500px;border-radius:2.300px;background:#0a0a0a"></div>
</div><div id="rtbar"><svg class="abs" style="left:11.2px;top:11.0px" width="14" height="14" viewBox="0 0 14 14"><path d="M1 1l12 12M13 1L1 13" stroke="#e6e6e8" stroke-width="1.400" fill="none"/></svg>
<svg class="abs" style="left:39.0px;top:9.2px" width="18" height="18" viewBox="0 0 18 18"><g fill="none" stroke="#e6e6e8" stroke-width="1.300"><path d="M10.300 7.700L16.800 1.200M11.300 1h5.700v5.700"/><path d="M7.700 10.300L1.200 16.800M1 11.300v5.700h5.700"/></g></svg>
<div class="abs" style="left:69.0px;top:8px;width:1px;height:20px;background:#3e3e42"></div>
<svg class="abs" style="left:82.3px;top:9.0px" width="19" height="18" viewBox="0 0 19 18"><g fill="none" stroke="#e6e6e8" stroke-width="1.300"><rect x="1" y="1" width="6.200" height="5.800"/><rect x="11.800" y="1" width="6.200" height="5.800"/><rect x="1" y="11.200" width="6.200" height="5.800"/><rect x="11.800" y="11.200" width="6.200" height="5.800"/><path d="M7.200 3.900h4.600M7.200 14.100h4.600M14.900 6.800v4.400M9.500 3.900v10.200"/></g></svg>
<svg class="abs" style="left:119.8px;top:9.5px" width="11" height="17" viewBox="0 0 11 17"><path d="M9.800 1L1.500 8.500 9.800 16" stroke="#e6e6e8" stroke-width="1.700" fill="none"/></svg>
<svg class="abs" style="left:149.5px;top:9.5px" width="11" height="17" viewBox="0 0 11 17"><path d="M1.200 1l8.300 7.500L1.200 16" stroke="#5c5c60" stroke-width="1.700" fill="none"/></svg>
<svg class="abs" style="left:178.2px;top:8.0px" width="15.0" height="18.6"><use href="#i-projg"/></svg>
<svg class="abs" style="left:200.8px;top:12.300px" width="7" height="12" viewBox="0 0 7 12"><path d="M1.200 1l4 5-4 5" stroke="#8e8e92" stroke-width="1.200" fill="none"/></svg>
<svg class="abs" style="left:211.7px;top:10.0px" width="20.2" height="15.4"><use href="#i-foldg"/></svg>
<svg class="abs" style="left:237.0px;top:12.300px" width="7" height="12" viewBox="0 0 7 12"><path d="M1.200 1l4 5-4 5" stroke="#8e8e92" stroke-width="1.200" fill="none"/></svg>
<svg class="abs" style="left:250.0px;top:8.0px" width="15.0" height="18.6"><use href="#i-sbg"/></svg>
<svg class="abs" style="left:273.5px;top:12.300px" width="7" height="12" viewBox="0 0 7 12"><path d="M1.200 1l4 5-4 5" stroke="#8e8e92" stroke-width="1.200" fill="none"/></svg>
<svg class="abs" style="left:286.4px;top:8.0px" width="15.0" height="18.6"><use href="#i-sbg"/></svg>
<span class="abs" style="left:309.2px;top:0;line-height:36px;font-size:15.2px;color:#a8a8ab;white-space:nowrap;letter-spacing:-0.25px;-webkit-text-stroke:0.25px currentColor">Mai...se)</span>
<svg class="abs" style="left:371.5px;top:12.300px" width="7" height="12" viewBox="0 0 7 12"><path d="M1.200 1l4 5-4 5" stroke="#8e8e92" stroke-width="1.200" fill="none"/></svg>
<span class="abs" style="left:382.0px;top:0;line-height:36px;font-size:15.1px;color:#a8a8ab;white-space:nowrap;letter-spacing:0.00px;-webkit-text-stroke:0.25px currentColor">No Selection</span>
<svg class="abs" style="left:484.3px;top:9px" width="24" height="17" viewBox="0 0 24 17"><path d="M0 1h17M0 4.800h24M0 8.600h17M0 12.400h24M0 16.200h24" stroke="#e6e6e8" stroke-width="1.300"/></svg>
<div class="abs" style="left:520.3px;top:8px;width:1px;height:20px;background:#3e3e42"></div>
<svg class="abs" style="left:531.5px;top:8.5px" width="18" height="18" viewBox="0 0 18 18"><g fill="none" stroke="#e6e6e8" stroke-width="1.300"><rect x=".8" y=".8" width="16.400" height="16.400"/><path d="M6.300 .8v16.400M8.800 9h6M11.800 6v6"/></g></svg></div><div id="rtbot"><svg class="abs" style="left:12.8px;top:10.500px" width="19" height="16" viewBox="0 0 19 16"><rect x=".7" y=".7" width="17.300" height="14.300" fill="none" stroke="#c9c9cc" stroke-width="1.200"/><rect x="2.600" y="2.600" width="2.200" height="10.500" fill="#c9c9cc"/></svg>
<span class="abs" style="left:52.8px;top:0;line-height:38px;font-size:16.800px;color:#f2f2f4;white-space:nowrap;-webkit-text-stroke:0.25px currentColor">View as: iPhone 11 (<span style="font-size:12px;color:#8d8d91">w</span><span style="margin-left:1.500px">C</span><span style="font-size:12px;color:#8d8d91;margin-left:7px">h</span><span style="margin-left:2px">R)</span></span>
<svg class="abs" style="left:390.0px;top:9.500px" width="21" height="18" viewBox="0 0 21 18"><g fill="none" stroke="#c9c9cc" stroke-width="1.250"><path d="M4.500 1H1v4.500M16.500 1H20v4.500M4.500 17H1v-4.500M16.500 17H20v-4.500"/><path d="M15 7.500a4.800 4.800 0 1 0 .3 3"/><path d="M15.700 4.200v3.600h-3.600"/></g></svg>
<svg class="abs" style="left:423.0px;top:9.500px" width="21" height="18" viewBox="0 0 21 18"><g fill="none" stroke="#c9c9cc" stroke-width="1.250"><path d="M1 .5v17"/><rect x="4" y="2" width="11" height="5"/><rect x="4" y="10.500" width="16" height="5"/></g></svg>
<svg class="abs" style="left:456.8px;top:9.500px" width="21" height="18" viewBox="0 0 21 18"><g fill="none" stroke="#c9c9cc" stroke-width="1.250"><path d="M1 .5v17M20 .5v17M1 9h4.500M15.500 9H20"/><rect x="5.500" y="5" width="10" height="8"/></g></svg>
<svg class="abs" style="left:490.5px;top:9.500px" width="21" height="18" viewBox="0 0 21 18"><g fill="none" stroke="#c9c9cc" stroke-width="1.250"><path d="M1 .5v17M20 .5v17M1 9.500h3.500M16.500 9.500H20"/><path d="M10.500 5l5 8h-10z"/></g></svg>
<svg class="abs" style="left:529.2px;top:10px" width="21" height="17" viewBox="0 0 21 17"><g fill="none" stroke="#c9c9cc" stroke-width="1.250"><path d="M7 1H1v15h19V1h-6"/><path d="M10.500 .5v10.500M6.500 7.500l4 4 4-4"/></g></svg></div></div>
</div>
<div class="abs" style="left:0;top:30px;width:1px;height:909px;background:#3a4658"></div><div class="abs" style="left:0;top:939px;width:1650px;height:7px;background:linear-gradient(rgba(0,0,0,.55),rgba(0,0,0,0))"></div>
<div id="dock"></div><svg class="abs" style="left:0;top:0" width="1650" height="1031" viewBox="0 0 1650 1031">
<defs>
<linearGradient id="dfb" x1="0" y1="0" x2="0" y2="1"><stop offset="0" stop-color="#3fc4fb"/><stop offset="1" stop-color="#1c74e4"/></linearGradient>
<linearGradient id="dfw" x1="0" y1="0" x2="0" y2="1"><stop offset="0" stop-color="#f7fafc"/><stop offset="1" stop-color="#d5dde6"/></linearGradient>
<linearGradient id="dlp" x1="0" y1="0" x2="0" y2="1"><stop offset="0" stop-color="#c9ccd0"/><stop offset="1" stop-color="#7b7f84"/></linearGradient>
<linearGradient id="dlp2" x1="0" y1="0" x2="0" y2="1"><stop offset="0" stop-color="#aeb2b6"/><stop offset="1" stop-color="#8a8e93"/></linearGradient>
<radialGradient id="dsf" cx=".5" cy=".45" r=".55"><stop offset="0" stop-color="#27c0f7"/><stop offset="1" stop-color="#1a63e2"/></radialGradient>
<linearGradient id="dft" x1="0" y1="0" x2="0" y2="1"><stop offset="0" stop-color="#66f57c"/><stop offset="1" stop-color="#10bb2f"/></linearGradient>
<linearGradient id="das" x1="0" y1="0" x2="0" y2="1"><stop offset="0" stop-color="#22c6fb"/><stop offset="1" stop-color="#1a62ee"/></linearGradient>
<linearGradient id="dsp" x1="0" y1="0" x2="0" y2="1"><stop offset="0" stop-color="#d6dfe2"/><stop offset=".5" stop-color="#aeb1b3"/><stop offset="1" stop-color="#8c8d8f"/></linearGradient>
<linearGradient id="dqt" x1="0" y1="0" x2="0" y2="1"><stop offset="0" stop-color="#2454e4"/><stop offset=".5" stop-color="#2a90f6"/><stop offset="1" stop-color="#31d6fb"/></linearGradient><linearGradient id="dqs" x1="0" y1="0" x2="1" y2="1"><stop offset="0" stop-color="#6b6e72"/><stop offset="1" stop-color="#323336"/></linearGradient>
<linearGradient id="dqr" x1="0" y1="0" x2="0" y2="1"><stop offset="0" stop-color="#868b92"/><stop offset=".45" stop-color="#5f6368"/><stop offset="1" stop-color="#333538"/></linearGradient>
<linearGradient id="dtr" x1="0" y1="0" x2="1" y2="0"><stop offset="0" stop-color="#62666b"/><stop offset=".3" stop-color="#93969a"/><stop offset=".65" stop-color="#7c7f84"/><stop offset="1" stop-color="#575b60"/></linearGradient>
<linearGradient id="dxc" x1="0" y1="0" x2="0" y2="1"><stop offset="0" stop-color="#52b8f7"/><stop offset="1" stop-color="#1d84ee"/></linearGradient>
<linearGradient id="dhm" x1="0" y1="0" x2="1" y2="1"><stop offset="0" stop-color="#f2f3f4"/><stop offset=".5" stop-color="#a9adb2"/><stop offset="1" stop-color="#6c7076"/></linearGradient>
<clipPath id="cfind"><rect x="153" y="955.600" width="58.700" height="54.100" rx="4.500"/></clipPath>
<clipPath id="cchr"><circle cx="638.800" cy="982.800" r="31.300"/></clipPath>
</defs>
<!-- running dots -->
<circle cx="181.700" cy="1026" r="2.400" fill="#8b909c"/><circle cx="638.300" cy="1026" r="2.400" fill="#8b909c"/><circle cx="942.400" cy="1026" r="2.400" fill="#8b909c"/>
<!-- separators -->
<rect x="997.700" y="951.500" width="1.200" height="68" fill="#4a5061"/><rect x="1260.800" y="951.500" width="1.200" height="68" fill="#4a5061"/>

<!-- 1 Finder -->
<g clip-path="url(#cfind)">
 <rect x="153" y="955.600" width="58.700" height="54.100" fill="url(#dfb)"/>
 <path d="M182.500 955.600c-2 9-4.500 19-4.300 29.600h5.800c.2 9 1.500 17.500 4 24.500h23.700v-54.100z" fill="url(#dfw)"/>
</g>
<path d="M169.300 969.800v5.600M195.500 969.800v5.600" stroke="#1f2d3d" stroke-width="2" stroke-linecap="round"/>
<path d="M164.800 990.500c9 9 26.500 9 35.500 0" fill="none" stroke="#1f2d3d" stroke-width="1.800" stroke-linecap="round"/>
<path d="M182.500 955.600c-2 9-4.500 19-4.300 29.600h5.800c.2 9 1.500 17.500 4 24.500" fill="none" stroke="#1f2d3d" stroke-width="1.100" opacity=".55"/>

<!-- 2 Launchpad -->
<circle cx="258.500" cy="982.800" r="31.500" fill="url(#dlp)"/><circle cx="258.500" cy="982.800" r="28.300" fill="url(#dlp2)"/>
<g transform="translate(258.500 982.800) rotate(40)" fill="#3a3d41">
 <path d="M0-25c5.500 5 8.500 13 8.500 22 0 5-.8 9.500-2.200 13h-12.600c-1.400-3.500-2.200-8-2.200-13 0-9 3-17 8.500-22z"/>
 <path d="M-8.200 0l-7.300 9.500v6.500l9-5zM8.200 0l7.300 9.500v6.500l-9-5z"/>
 <path d="M-4.200 12h8.400l-1.400 7.500c-.8 2.500-2 4.500-2.800 5.500-.8-1-2-3-2.800-5.500z"/>
 <circle cx="0" cy="-9.500" r="3.600" fill="#8f9398"/>
</g>

<!-- 3 Safari -->
<circle cx="334.800" cy="982.800" r="31.500" fill="#f1f2f4"/><circle cx="334.800" cy="982.800" r="28.800" fill="url(#dsf)"/>
<circle cx="334.800" cy="982.800" r="24.500" fill="none" stroke="#e8f4ff" stroke-width="5" stroke-dasharray="0.800 2.410" opacity=".9"/>
<path d="M353.300 963.700L338.300 986.300 331.300 979.300z" fill="#f0433a"/><path d="M316.300 1001.900L338.300 986.300 331.300 979.300z" fill="#f4f5f7"/><path d="M316.300 1001.900L338.300 986.300l-3.500-3.500z" fill="#cfd3d8"/><path d="M353.300 963.700L338.300 986.300l-3.500-3.500z" fill="#c62f2b"/>

<!-- 4 Photos -->
<circle cx="410.700" cy="982.800" r="31.500" fill="#f3f3f3"/>
<g transform="translate(410.700 982.800)" style="isolation:isolate">
 <ellipse cx="0" cy="-14" rx="8" ry="12.800" style="mix-blend-mode:multiply" opacity=".88" fill="#f79f2d"/>
 <ellipse cx="0" cy="-14" rx="8" ry="12.800" style="mix-blend-mode:multiply" opacity=".88" fill="#f2d23a" transform="rotate(45)"/>
 <ellipse cx="0" cy="-14" rx="8" ry="12.800" style="mix-blend-mode:multiply" opacity=".88" fill="#a9d054" transform="rotate(90)"/>
 <ellipse cx="0" cy="-14" rx="8" ry="12.800" style="mix-blend-mode:multiply" opacity=".88" fill="#5cb98a" transform="rotate(135)"/>
 <ellipse cx="0" cy="-14" rx="8" ry="12.800" style="mix-blend-mode:multiply" opacity=".88" fill="#5aa6e2" transform="rotate(180)"/>
 <ellipse cx="0" cy="-14" rx="8" ry="12.800" style="mix-blend-mode:multiply" opacity=".88" fill="#9381d3" transform="rotate(225)"/>
 <ellipse cx="0" cy="-14" rx="8" ry="12.800" style="mix-blend-mode:multiply" opacity=".88" fill="#d66aa6" transform="rotate(270)"/>
 <ellipse cx="0" cy="-14" rx="8" ry="12.800" style="mix-blend-mode:multiply" opacity=".88" fill="#e9514a" transform="rotate(315)"/>
 <ellipse cx="0" cy="-14" rx="8" ry="12.800" style="mix-blend-mode:multiply" fill="#f79f2d" opacity=".0"/>
</g>

<!-- 5 FaceTime -->
<rect x="454.800" y="956.300" width="55.800" height="49" rx="6.500" fill="url(#dft)"/>
<rect x="464" y="969" width="26" height="22.500" rx="4.500" fill="#f4f4f4"/><path d="M491.500 978l8-7.500v21l-8-7.500z" fill="#f4f4f4"/>
<circle cx="502.200" cy="994" r="15.600" fill="#f6f6f6"/>
<path d="M495.800 988.500c.3 5.500 5.700 11.400 12.100 12.300 1.100.1 2.600-1.400 2.500-2.400l-3-2.200-1.900 1.100c-2.200-.9-4.600-3.500-5.400-5.700l1.200-1.800-2-3.100c-1.400-.3-3.200.7-3.500 1.800z" fill="#2fce4a"/>
<circle cx="509.500" cy="960.600" r="13" fill="#ee3f3b"/>
<text x="509.500" y="965.800" font-family="Liberation Sans" font-size="14.500" fill="#fff" text-anchor="middle">1</text>

<!-- 6 App Store -->
<circle cx="562.900" cy="982.800" r="31.200" fill="url(#das)"/>
<g stroke="#f2f6fb" stroke-width="4.600" stroke-linecap="round" fill="none">
 <path d="M566.800 965.200L549.500 995.500"/><path d="M559.500 965.200L576.300 995.500"/><path d="M544.500 988h37"/>
</g>
<path d="M553 988h20" stroke="url(#das)" stroke-width="5"/>
<path d="M559.500 965.200L576.300 995.500" stroke="#f2f6fb" stroke-width="4.600" stroke-linecap="round"/>
<path d="M566.800 965.200L556 984" stroke="#f2f6fb" stroke-width="4.600" stroke-linecap="round"/>
<circle cx="586.200" cy="961.200" r="13" fill="#ee3f3b"/>
<text x="586.200" y="966.400" font-family="Liberation Sans" font-size="14.500" fill="#fff" text-anchor="middle">5</text>

<!-- 7 Chrome -->
<g clip-path="url(#cchr)">
 <circle cx="638.800" cy="982.800" r="31.300" fill="#de4b3e"/>
 <path d="M638.800 982.800L611.700 967.200 600 1000 625 1020 638.800 1014.100 652.300 990.600z" fill="#1fa15d"/>
 <path d="M638.800 982.800L611.700 967.200 605 960 600 1020 640 1020 623.200 1010z" fill="#1fa15d"/>
 <path d="M669 967.200H638.800l13.500 23.400-16 27.500 10 2 28-20z" fill="#fcc934"/>
 <path d="M638.800 967.200h31.500l5 25-20 25-20 1 16.900-27.700z" fill="#fcc934"/>
</g>
<circle cx="638.800" cy="982.800" r="15.600" fill="#f4f4f4"/><circle cx="638.800" cy="982.800" r="12.300" fill="#4b8bf4"/>

<!-- 8 Skype -->
<circle cx="703" cy="970" r="15.500" fill="#1597dc"/><circle cx="728" cy="996" r="15.500" fill="#1286cf"/>
<circle cx="715.200" cy="982.800" r="26" fill="#1fa9ea"/>
<text x="715.200" y="997.300" font-family="Liberation Sans" font-weight="bold" font-size="40" fill="#fff" text-anchor="middle">S</text>

<!-- 9 Notes -->
<g transform="rotate(-4.500 791.500 982)">
 <rect x="765.500" y="953.500" width="51.500" height="58.500" rx="2" fill="#fbfbf8"/>
 <rect x="765.500" y="953.500" width="51.500" height="9.500" rx="2" fill="#f8cf3e"/><rect x="765.500" y="961" width="51.500" height="2.200" fill="#e2b52c"/>
 <path d="M765.500 968.500h51.500M765.500 973h51.500M765.500 977.500h51.500M765.500 982h51.500M765.500 986.500h51.500M765.500 991h51.500M765.500 995.500h51.500M765.500 1000h51.500M765.500 1004.500h51.500M765.500 1009h51.500" stroke="#cfcfcb" stroke-width=".8"/>
 <rect x="765.500" y="1009.500" width="51.500" height="2.500" fill="#d9cfae"/>
</g>
<!-- 10 System Preferences -->
<rect x="835.900" y="954" width="61.800" height="57.500" rx="2.800" fill="url(#dsp)"/>
<rect x="836.300" y="954.400" width="61" height="56.700" rx="2.500" fill="none" stroke="#e3e8ea" stroke-width=".8" opacity=".55"/>
<circle cx="867" cy="983" r="24.800" fill="#2a2a2c"/>
<circle cx="867" cy="983" r="20.800" fill="none" stroke="#c6c3bd" stroke-width="3.400" stroke-dasharray="2.700 2.327"/>
<circle cx="867" cy="983" r="17.300" fill="none" stroke="#b3b0aa" stroke-width="4.600"/>
<circle cx="867" cy="983" r="15" fill="#53514e"/>
<g stroke="#c4c1bb" stroke-width="3.800" stroke-linecap="butt"><path d="M867 983h15.300M867 983l-8.400 12.900M867 983l-9-12.600"/></g>
<circle cx="867" cy="983" r="15" fill="none" stroke="#8e8b86" stroke-width="1"/>
<circle cx="867" cy="983" r="2.100" fill="#a5b7cc"/>

<!-- 11 Xcode -->
<path d="M909 965.600L959.700 958 973.900 1002.200 916.100 1012z" fill="url(#dxc)"/>
<path d="M911.500 967.500L958.300 960.500 971.300 1000.800 917.800 1009.800z" fill="none" stroke="#a9dbff" stroke-width=".8" opacity=".8"/>
<g fill="none" stroke="#b8e0ff" stroke-width="1" opacity=".9">
 <path d="M938 965.500l-13 33 3 3 13.500-33zM936 968l8-1.200"/><path d="M941 963.500l4-.6 18 34-4 .8z"/><path d="M921 986.500l41-7 1 4.200-41 7z"/>
 <path d="M919 1005.500l50-8.500M958 999.500l11-1.900"/>
</g>
<path d="M959.700 961.800l6 1.700-14.200 47c-.6 1.800-2.400 2.700-4.200 2.100-1.800-.6-2.700-2.400-2.100-4.200z" fill="#252628"/>
<path d="M947 1008.500l12-40" stroke="#46484c" stroke-width="1.300" fill="none" opacity=".8"/>
<path d="M961 958l5.200 1.800-5.800 18.500-5.400-1.600z" fill="#d9dcdf"/><path d="M964 959l2.200.8-5.800 18.500-2.400-.7z" fill="#8e9298"/>
<path d="M945.900 954.200c1.500-2.300 5.500-4 10-4.100 4-.2 8 .2 11 1 2 .5 3.600 2 4.800 4.200l5.500 1.100-1.100 6-6-1.700c-1.500 1.800-3 2.800-4.400 2.800l-6-1.700c-.5-3-3-6-6.800-7.600-2.500-1-5-1-7 0z" fill="url(#dhm)"/>
<path d="M971.700 955.300l5.500 1.100-1.100 6-6-1.700z" fill="#9ea2a8"/><path d="M975.300 956l1.900.4-1.100 6-2-.5z" fill="#d5d8dc"/>

<!-- 13 QuickTime -->
<circle cx="1053.500" cy="982.500" r="31" fill="url(#dqr)"/>
<circle cx="1053.500" cy="982.500" r="20.300" fill="url(#dqt)"/>
<path d="M1053.500 982.500l22.500 22.500" stroke="url(#dqs)" stroke-width="12.500" stroke-linecap="round"/>
<path d="M1071 1000l13.500 3.500v9.500h-9z" fill="#353639"/>

<!-- 14 Excel -->
<rect x="1113" y="955.600" width="47.600" height="54.100" rx="3" fill="#185c37"/>
<path d="M1116 955.600h20.800v13.500H1113v-10.500c0-1.700 1.300-3 3-3z" fill="#21a366"/>
<path d="M1136.800 955.600h20.800c1.700 0 3 1.300 3 3v10.500h-23.800z" fill="#33c481"/>
<rect x="1113" y="969.100" width="23.800" height="13.500" fill="#107c41"/><rect x="1136.800" y="969.100" width="23.800" height="13.500" fill="#21a366"/>
<rect x="1113" y="982.600" width="23.800" height="13.500" fill="#185c37"/><rect x="1136.800" y="982.600" width="23.800" height="13.500" fill="#107c41"/>
<rect x="1098.300" y="967" width="31.500" height="31.500" rx="2.800" fill="#107c41"/>
<rect x="1099.500" y="968.500" width="31.500" height="31.500" rx="2.800" fill="#000" opacity=".18"/>
<rect x="1098.300" y="967" width="31.500" height="31.500" rx="2.800" fill="#0f773e"/>
<path d="M1106.300 973.500h4.300l3.600 6.700 3.700-6.700h4.100l-5.600 9.300 5.800 9.200h-4.300l-3.900-7-3.900 7h-4.100l5.700-9.300z" fill="#fff"/>

<!-- 15 Preview -->
<g transform="rotate(4 1205 975)"><rect x="1181" y="956" width="53" height="42" fill="#f4f4f2"/><rect x="1183.500" y="958.500" width="48" height="37" fill="#b89a6a"/><path d="M1183.500 958.500h48v9h-48z" fill="#c9ad7d"/><path d="M1186 962h3v2h-3zM1194 966h4v2h-4zM1205 961h3v2h-3zM1215 968h4v2h-4zM1224 963h3v2h-3zM1190 975h3v2h-3zM1220 980h4v2h-4z" fill="#8d7147"/></g>
<g transform="rotate(-9 1203 985)"><rect x="1176" y="964" width="52" height="42" fill="#f6f6f4"/><rect x="1178.500" y="966.500" width="47" height="37" fill="#6fa5e6"/><rect x="1178.500" y="982" width="47" height="9" fill="#2d62a6"/><path d="M1178.500 986l8-1 6 2 9-2 8 2 8-3 8 2v3h-47z" fill="#e9f1f8"/><path d="M1178.500 990h47v13.500h-47z" fill="#5e6f7a"/><path d="M1178.500 995l10-4 9 3 10-2 8 4 10-2v9.500h-47z" fill="#6b5a45"/><path d="M1178.500 990l12 1 10-1.500 14 2 11-1v3l-12 1-12-2-11 2-12-1z" fill="#cfe0ee"/></g>
<path d="M1211.500 989c0-4 27.400-4 27.400 0v18c0 5-27.400 5-27.400 0z" fill="#6a6c70"/><path d="M1211.500 989c0-4 27.400-4 27.400 0v18c0 5-27.400 5-27.400 0z" fill="url(#dtr)" opacity=".85"/>
<ellipse cx="1225.200" cy="987.500" rx="13.900" ry="9.600" fill="#c9ccd0"/><ellipse cx="1225.200" cy="987.500" rx="11.600" ry="7.600" fill="#4f7fb5"/><path d="M1214.500 989.500c3-2.500 6-1.500 9-0.500s7 1 12.500-2c-.5 5-5 8-11 8s-10-2.500-10.500-5.500z" fill="#8a7560"/><path d="M1214.300 988c3-2 6-1.500 9-.5s7.500.5 12.500-2.500l.2 2c-5 3-9.500 3.500-12.700 2.500s-6-1.500-8.800.5z" fill="#e6eef5"/>
<ellipse cx="1225.200" cy="987.500" rx="12.800" ry="8.600" fill="none" stroke="#9da0a5" stroke-width="1.200"/>

<!-- 17 XLSX doc -->
<rect x="1299" y="948.800" width="33" height="30" fill="#f2f2f0"/><rect x="1301.500" y="951.500" width="28" height="24" fill="#dfe8e2"/><path d="M1318 975.500c0-9 3-16 11.500-18v18z" fill="#55705e"/>
<path d="M1285.900 964.500h45.500l13.900 14.500v28.700h-59.400z" fill="#fbfbfb"/>
<path d="M1331.400 964.500c1.500 6-0 10-3.500 12.500 5 -1 12 0 17.400 2z" fill="#d9d9d9"/>
<g fill="#c4c6ca"><rect x="1290" y="968" width="14" height="2.500"/><rect x="1290" y="973" width="10" height="9"/><rect x="1290" y="985" width="5" height="2"/><rect x="1290" y="990" width="12" height="8"/><rect x="1309" y="968" width="18" height="2"/><rect x="1307" y="985" width="18" height="11"/><rect x="1328" y="982" width="14" height="4"/></g>
<path d="M1308 982l6-10 6 10z" fill="#f2a33c"/><path d="M1311 982l3-5 3 5z" fill="#d9483b"/><path d="M1328 990l4-5 4 6 4-4 3 5" fill="none" stroke="#e06a5f" stroke-width="1"/><path d="M1328 994l5-3 4 3 6-4" fill="none" stroke="#6d8fd1" stroke-width="1"/>
<text x="1315.500" y="1006" font-family="Liberation Sans" font-size="9.500" fill="#555" text-anchor="middle" letter-spacing=".2">XLSX</text>

<!-- 18 screenshot thumb -->
<rect x="1358.400" y="964.600" width="66.600" height="36.400" fill="#25262b"/>
<rect x="1358.400" y="964.600" width="66.600" height="1.600" fill="#3a3a3d"/>
<rect x="1358.400" y="966.200" width="13.500" height="34.800" fill="#2d3640"/>
<rect x="1406" y="966.200" width="19" height="34.800" fill="#343436"/>
<g stroke-width=".9" fill="none"><path d="M1360.500 969h6M1361.500 971h7M1361.500 973h6M1361.500 975h8M1361.500 977h5M1361.500 979h7M1361.500 981h6M1361.500 983h5M1360.500 985h6M1360.500 989h7M1360.500 993h6M1360.500 997h8" stroke="#d7b34a" opacity=".8"/>
<path d="M1375 969h10M1377 971.500h14M1377 974h9M1379 976.500h12M1379 979h10M1377 981.500h6M1377 985h13M1379 987.500h11M1379 990h8M1377 993h4" stroke="#d66f9f"/>
<path d="M1394 969h8M1394 972h10M1396 974.500h8M1396 977h9M1394 980h6M1394 984h10M1396 986.500h8M1396 989h9M1394 992h5" stroke="#8f7fd6"/>
<path d="M1386 971.500h4M1388 976.500h5M1386 985h5" stroke="#6fc3b1"/></g>
<rect x="1372" y="994" width="34" height="7" fill="#1c1d20"/>
<path d="M1400.500 996l20.500-4 4 19-20.500 4z" fill="url(#dxc)"/><path d="M1411 994l-5 14M1412 994l7 12M1404 1006l17-3" stroke="#bfe3ff" stroke-width=".7" fill="none"/>
<path d="M1419 991.500l3 1.200-7.500 19c-.4.900-1.200 1.200-2 .9-.8-.3-1.100-1.200-.8-2z" fill="#2b2c2f"/><path d="M1413 991c2.500-2 6-3 10-1.500l2 1c.5.300.6.800.4 1.200l-1.200 2.500c-.2.400-.7.600-1.100.4l-5.500-2.400c-1.500-.5-3-.5-4.600-.1z" fill="#c9cdd2"/>

<!-- 19 Trash -->
<path d="M1442 960c0-6 51.200-6 51.200 0l-6.200 47c-.8 6-38 6-38.800 0z" fill="url(#dtr)" opacity=".82"/>
<path d="M1442 960c0-6 51.200-6 51.200 0l-6.200 47c-.8 6-38 6-38.800 0z" fill="none" stroke="#a8abb0" stroke-width=".8" opacity=".6"/>
<ellipse cx="1467.600" cy="960" rx="25.600" ry="4.800" fill="#4d5055"/><ellipse cx="1467.600" cy="960" rx="25.600" ry="4.800" fill="none" stroke="#b9bcc1" stroke-width="1"/>
<path d="M1449 959l2-8 7-2 4 3 5-4 7 1 3-3 6 2 3 5 4 2-1 5c-10 4-30 4-40 0z" fill="#eceded"/>
<path d="M1451 951l7-2 2 6-6 3zM1467 948l7 1-2 7-6-2zM1480 949l6 2-1 6-6 0z" fill="#c9cbce"/>
<path d="M1455 953l5 1 1 5-5 1z" fill="#2e66c9"/><path d="M1461 952l5 3-3 4z" fill="#3fae5a"/><path d="M1474 951l5 2-3 5-4-2z" fill="#e2b13a"/><path d="M1478 955l4-1 1 4-4 2z" fill="#d9503f"/><path d="M1469 955l4 1-1 4-4-1z" fill="#2a4fa3"/>
<path d="M1450 968c3 12 4 26 6 38M1485 968c-2 12-3 26-5 38" fill="none" stroke="#c5c8cc" stroke-width="4" opacity=".12"/>
</svg>

</div>
</body>
</html>
